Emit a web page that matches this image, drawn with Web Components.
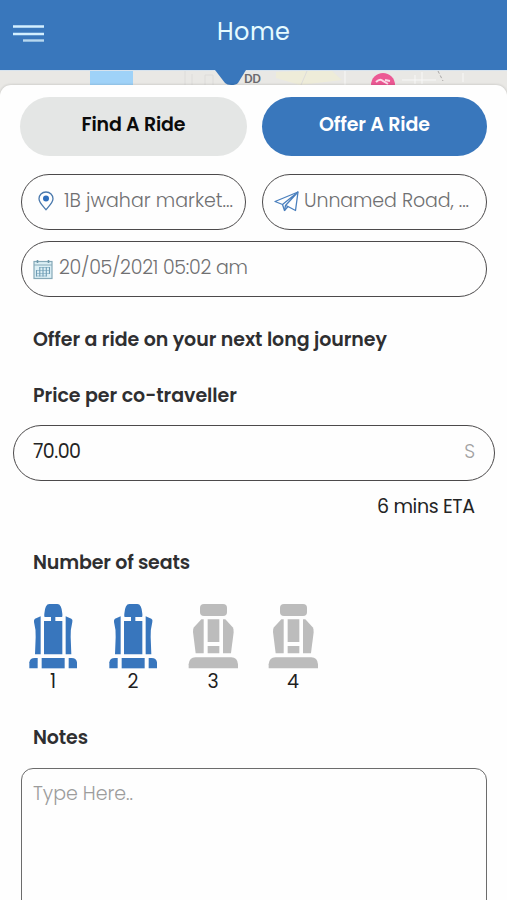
<!DOCTYPE html>
<html lang="en">
<head>
<meta charset="utf-8">
<title>Home</title>
<style>
  html, body { margin: 0; height: 100%; overflow: hidden; }
  body {
    background: #fefefe;
    font-family: Poppins, Inter, "Open Sans", sans-serif;
    color: #2f2f31;
    --blue: #3977bc;
    --line: #4c4a4b;
  }
</style>
</head>
<body>
<ride-app></ride-app>

<script>
// Single line of text, tracked so that it fills the given width
class FitText extends HTMLElement {
  constructor() {
    super();
    this.attachShadow({ mode: 'open' });
    this.shadowRoot.innerHTML = `
      <style>
        :host { display: block; white-space: nowrap; height: 28px; line-height: 30px; font-size: 19px; width: max-content; }
        span { display: block; width: max-content; }
      </style>
      <span><slot></slot></span>
    `;
  }

  connectedCallback() {
    const target = parseFloat(this.getAttribute('width'));
    const span = this.shadowRoot.querySelector('span');
    const count = this.textContent.length;
    if (!target || count < 2) return;
    const gap = (target - span.getBoundingClientRect().width) / (count - 1);
    span.style.letterSpacing = `${gap}px`;
    span.style.marginRight = `${-gap}px`;
  }
}

// Blue bar with menu button and title
class AppHeader extends HTMLElement {
  constructor() {
    super();
    this.attachShadow({ mode: 'open' });
    this.shadowRoot.innerHTML = `
      <style>
        :host {
          display: grid;
          grid-template-columns: 1fr auto 1fr;
          align-items: start;
          height: 70px;
          box-sizing: border-box;
          padding: 0 13px;
          background: var(--blue);
          color: #e6fbff;
        }
        svg { display: block; margin-top: 24px; }
        .title { margin-top: 17px; }
      </style>
      <svg width="32" height="20" viewBox="0 0 32 20" fill="none" stroke="#d3efff" stroke-width="2.4">
        <path d="M0 2.5H31M0 10H31"/><path d="M10 16.5H31" stroke="#b8d8ef"/>
      </svg>
      <div class="title"><slot></slot></div>
    `;
  }
}

// Strip of the map left visible above the sheet
class MapStrip extends HTMLElement {
  constructor() {
    super();
    this.attachShadow({ mode: 'open' });
    this.shadowRoot.innerHTML = `
      <style>
        :host { display: block; height: 15px; }
        svg { display: block; }
        text { font: 500 13.5px Roboto, sans-serif; fill: #6b6b70; }
      </style>
      <svg width="507" height="30" viewBox="0 0 507 30">
        <rect width="507" height="30" fill="#e9e8e5"/>
        <rect x="90" width="43" height="30" fill="#9fd2f8"/>
        <path d="M276 2 331 0 342 10 300 15 276 8Z" fill="#eeecd9"/>
        <g fill="none" stroke="#dddcda">
          <path d="M185 0V15M192 4V15M205 15V5h8v10M307 1 301 15"/>
          <path d="M345 0V15M415 5V14M422 2V14M463 3V12M402 10H436" stroke="#f8f8f7"/>
        </g>
        <path d="M438 1 443 11" stroke="#a9a7a6" stroke-dasharray="3 2"/>
        <circle cx="383" cy="15" r="12" fill="#ec5994"/>
        <path d="M376 12q4-4 7-1l5 3M385 10l5 1" fill="none" stroke="#fbdbe8" stroke-width="2"/>
        <path d="M0 0H507" stroke="#d7e3ee" stroke-width="2"/>
        <path d="M215 0H246L238 13Q236 15 231 15Q227 15 225 13Z" fill="#3977bc"/>
        <text x="244" y="13" textLength="17">DD</text>
      </svg>
    `;
  }
}

class PillButton extends HTMLElement {
  constructor() {
    super();
    this.attachShadow({ mode: 'open' });
    this.shadowRoot.innerHTML = `
      <style>
        :host {
          display: flex;
          justify-content: center;
          box-sizing: border-box;
          height: 59px;
          padding-top: 13px;
          border-radius: 30px;
          background: #e4e6e5;
          color: #0b0b0b;
          font-weight: 600;
        }
        :host([active]) { background: var(--blue); color: #fff; }
      </style>
      <slot></slot>
    `;
  }
}

// Rounded outline with an optional icon and trailing unit
class PillField extends HTMLElement {
  constructor() {
    super();
    this.attachShadow({ mode: 'open' });
    this.shadowRoot.innerHTML = `
      <style>
        :host {
          display: flex;
          align-items: flex-start;
          box-sizing: border-box;
          height: 56px;
          padding: 11px 12px 0 11px;
          border: 1px solid var(--line);
          border-radius: 28px;
          color: #707072;
          font-weight: 300;
        }
        :host([value]) { padding: 11px 19px 0 19px; color: #242424; font-weight: 400; }
        ::slotted([slot="unit"]) { margin-left: auto; color: #a2a2a2; font-weight: 300; }
      </style>
      <slot name="icon"></slot>
      <slot></slot>
      <slot name="unit"></slot>
    `;
  }
}

const ICONS = {
  pin: `<svg width="16" height="20" viewBox="0 0 16 20">
    <path d="M8 1C3.900 1 1 4 1 7.800C1 12 6 16 8 18.700C10 16 15 12 15 7.800C15 4 12.100 1 8 1Z" fill="none" stroke="#4978ac" stroke-width="1.300"/>
    <circle cx="8" cy="7.500" r="3" fill="#2f6fbd"/></svg>`,
  plane: `<svg width="25" height="21" viewBox="0 0 25 21" fill="none" stroke="#4a7fbd" stroke-width="1.300" stroke-linejoin="round">
    <path d="M24 1 1 10.500 8.500 13.500 10.500 19.500 14 15.500 21.500 19.500Z"/>
    <path d="M24 1 8.500 13.500M24 1 11.500 14.500 10.500 19.500M11.500 14.500 14 15.500"/></svg>`,
  calendar: `<svg width="20" height="21" viewBox="0 0 20 21" fill="none">
    <rect x="1" y="2.500" width="18" height="17" fill="#dceff5" stroke="#86a9b8" stroke-width="1.200"/>
    <path d="M1 6H19" stroke="#86a9b8"/><path d="M4.500 1V4M15.500 1V4" stroke="#6e98aa" stroke-width="1.600"/>
    <path d="M6.500 8.500H16.500M3.500 11.500H16.500M3.500 14.500H16.500M3.500 17H13.500" stroke="#8fb6c6" stroke-width="0.800"/>
    <path d="M3.500 11V17.500M6.800 8V17.500M10 8V17.500M13.300 8V17.500M16.500 8V15" stroke="#6f9db6" stroke-width="1.100"/></svg>`
};

class AppIcon extends HTMLElement {
  constructor() {
    super();
    this.attachShadow({ mode: 'open' });
  }

  connectedCallback() {
    this.shadowRoot.innerHTML = `
      <style>:host { display: block; flex: none; } svg { display: block; }</style>
      ${ICONS[this.getAttribute('name')]}
    `;
  }
}

const SEAT_TAKEN = `
  <path d="M72 192V92H93V80H75Q72 80 73 70Q75 41 88 41H112Q125 41 127 70Q128 80 125 80H106V92H127V192Z"/>
  <path d="M62 78 45 85Q41 88 42 95Q48 118 47 140L45 192H62Z"/>
  <path d="M137 78 154 85Q159 88 157 95Q151 118 152 140L154 192H137Z"/>
  <path d="M28 234V216Q30 203 44 203H53V234Z"/>
  <path d="M65 203H134V234H65Z"/>
  <path d="M171 234V216Q169 203 155 203H146V234Z"/>`;

const SEAT_FREE = `
  <rect x="60" y="41" width="81" height="36" rx="12"/>
  <path d="M83 87H118V155H83ZM83 167H118V189H83Z"/>
  <path d="M71 87H64L42 111Q38 116 39 125L47 189H71Z"/>
  <path d="M129 87H136L158 111Q162 116 161 125L153 189H129Z"/>
  <path d="M26 234V222Q28 201 46 201H154Q172 201 174 222V234Z"/>`;

class SeatOption extends HTMLElement {
  constructor() {
    super();
    this.attachShadow({ mode: 'open' });
  }

  connectedCallback() {
    const selected = this.hasAttribute('selected');
    this.shadowRoot.innerHTML = `
      <style>
        :host {
          display: flex;
          flex-direction: column;
          align-items: center;
          width: 80px;
          font-size: 19px;
          line-height: 26px;
          color: #1f1f1f;
        }
        svg { display: block; flex: none; fill: #bcbcbc; }
        :host([selected]) svg { fill: #3876bd; }
      </style>
      <svg width="50" height="66" viewBox="24 38 150 198">${selected ? SEAT_TAKEN : SEAT_FREE}</svg>
      <span><slot></slot></span>
    `;
  }
}

class NotesBox extends HTMLElement {
  constructor() {
    super();
    this.attachShadow({ mode: 'open' });
    this.shadowRoot.innerHTML = `
      <style>
        :host {
          display: block;
          box-sizing: border-box;
          height: 160px;
          padding: 10px 11px;
          border: 1px solid #6c6c6c;
          border-radius: 12px;
          color: #9c9c9c;
          font-weight: 300;
        }
      </style>
      <slot></slot>
    `;
  }
}

class RideApp extends HTMLElement {
  constructor() {
    super();
    this.attachShadow({ mode: 'open' });
    this.shadowRoot.innerHTML = `
      <style>
        :host { display: flex; flex-direction: column; height: 900px; overflow: hidden; }
        app-header, map-strip { flex: none; }
        .sheet {
          position: relative;
          flex: 1;
          padding: 12px 20px 0;
          background: #fefefe;
          border-radius: 11px 11px 0 0;
          box-shadow: 0 0 3px rgba(0, 0, 0, 0.2);
        }
        .pair { display: grid; grid-template-columns: 227px 225px; gap: 15px; }
        .places { grid-template-columns: 225px 225px; gap: 16px; margin: 18px 0 11px 1px; }
        .date { margin: 0 0 0 1px; }
        h2 { margin: 28px 0 0 13px; font-weight: 600; }
        .price { margin: 16px -8px 0 -7px; }
        .eta { display: flex; justify-content: flex-end; margin: 11px 12px 0 0; color: #242424; }
        .seats { display: flex; margin: 27px 0 0 -7px; height: 95px; }
        h2.seats-title { margin-top: 28px; }
        h2.notes-title { margin-top: 25px; }
        notes-box { margin: 17px 0 0 1px; }
        .pin { margin: 5px 10px 0 5px; }
        .plane { margin: 5px 5px 0 0; }
        .calendar { margin: 6px 6px 0 0; }
      </style>
      <app-header><fit-text width="73" style="font-size: 24px">Home</fit-text></app-header>
      <map-strip></map-strip>
      <div class="sheet">
        <div class="pair">
          <pill-button><fit-text width="104">Find A Ride</fit-text></pill-button>
          <pill-button active><fit-text width="111">Offer A Ride</fit-text></pill-button>
        </div>
        <div class="pair places">
          <pill-field><app-icon slot="icon" class="pin" name="pin"></app-icon><fit-text width="169">1B jwahar market...</fit-text></pill-field>
          <pill-field><app-icon slot="icon" class="plane" name="plane"></app-icon><fit-text width="165">Unnamed Road, ...</fit-text></pill-field>
        </div>
        <pill-field class="date"><app-icon slot="icon" class="calendar" name="calendar"></app-icon><fit-text width="189">20/05/2021 05:02 am</fit-text></pill-field>
        <h2><fit-text width="354">Offer a ride on your next long journey</fit-text></h2>
        <h2><fit-text width="204">Price per co-traveller</fit-text></h2>
        <pill-field class="price" value><fit-text width="48">70.00</fit-text><fit-text slot="unit">S</fit-text></pill-field>
        <div class="eta"><fit-text width="98">6 mins ETA</fit-text></div>
        <h2 class="seats-title"><fit-text width="157">Number of seats</fit-text></h2>
        <div class="seats">
          <seat-option selected>1</seat-option>
          <seat-option selected>2</seat-option>
          <seat-option>3</seat-option>
          <seat-option>4</seat-option>
        </div>
        <h2 class="notes-title"><fit-text width="55">Notes</fit-text></h2>
        <notes-box><fit-text width="100">Type Here..</fit-text></notes-box>
      </div>
    `;
  }
}

customElements.define('app-header', AppHeader);
customElements.define('map-strip', MapStrip);
customElements.define('pill-button', PillButton);
customElements.define('pill-field', PillField);
customElements.define('app-icon', AppIcon);
customElements.define('seat-option', SeatOption);
customElements.define('notes-box', NotesBox);
customElements.define('ride-app', RideApp);
// Last, so the texts are measured inside finished parents
customElements.define('fit-text', FitText);
</script>
</body>
</html>
